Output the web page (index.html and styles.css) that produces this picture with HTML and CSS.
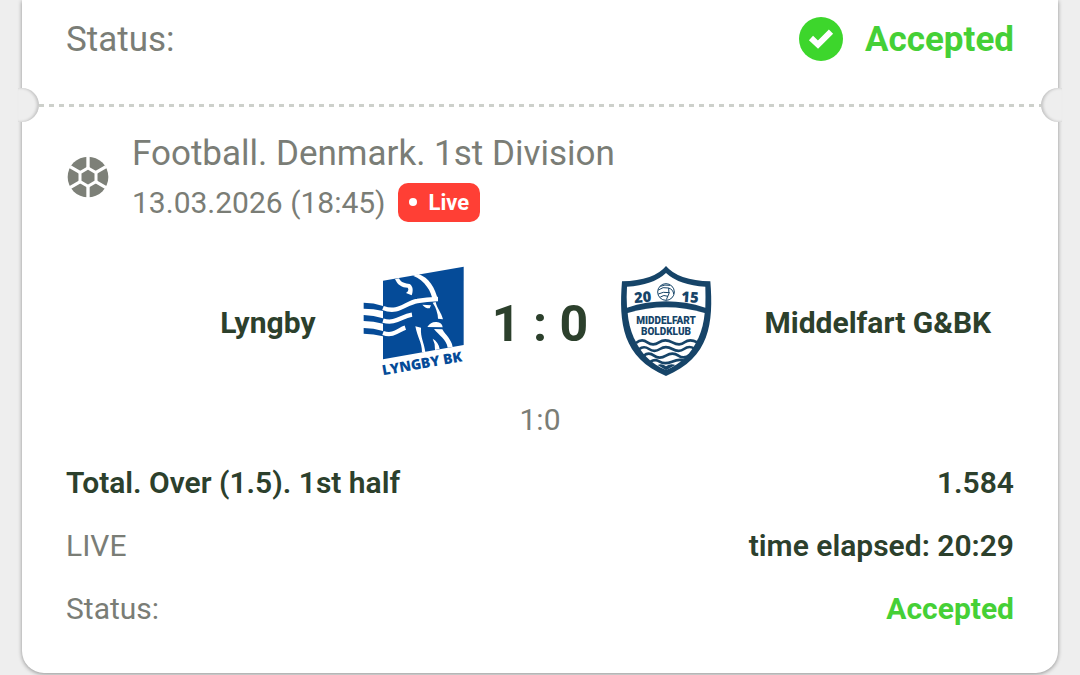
FILE: index.html
```
<!DOCTYPE html>
<html lang="en">
	<head>
		<meta charset="UTF-8">
		<meta name="viewport" content="width=device-width, initial-scale=1">
		<title>Bet slip</title>
		<link rel="stylesheet" href="styles.css">
	</head>
	<body>
		<main class="ticket">
			<div class="summary">
				<span class="label">Status:</span>
				<span class="accepted">
					<svg class="check" viewBox="0 0 132 132" aria-hidden="true">
						<circle cx="66" cy="66" r="66" fill="#3dd62c"/>
						<path d="M36 63 L57 83 L96 44" fill="none" stroke="#fff" stroke-width="18"/>
					</svg>
					Accepted
				</span>
			</div>

			<div class="tear"><div class="dashes"></div></div>

			<section class="match">
				<header class="event">
					<svg class="ball" viewBox="48 17 132 132" aria-hidden="true">
						<circle cx="114" cy="83" r="61" fill="#7d8078"/>
						<path d="M114 56 L138 70 V97 L114 111 L90 97 V70 Z" fill="none" stroke="#fff" stroke-width="9"/>
						<path d="M114 58 V20 M137 70 L168 52 M137 97 L168 115 M114 110 V146 M91 97 L60 115 M91 70 L60 52" stroke="#fff" stroke-width="10"/>
					</svg>
					<div>
						<div class="league">Football. Denmark. 1st Division</div>
						<div class="date">13.03.2026 (18:45) <span class="live">Live</span></div>
					</div>
				</header>

				<div class="teams">
					<span class="team home">Lyngby</span>
					<svg class="logo" viewBox="26 33 330 330" role="img" aria-label="Lyngby BK">
						<path d="M98 77 L340 35 V270 L98 313 Z" fill="#054b98"/>
						<!-- hair -->
						<path d="M40 143 Q70 143 98 153 V168 Q70 161 40 161 Z M40 180 Q70 181 98 190 V206 Q70 199 40 198 Z M40 219 Q70 219 98 228 V244 Q70 237 40 236 Z" fill="#054b98"/>
						<g fill="none" stroke="#fff" stroke-width="13">
							<path d="M98 159 C145 177 164 144 201 138 Q228 133 263 132"/>
							<path d="M98 197 C137 208 151 184 185 179"/>
							<path d="M98 234 C130 245 144 225 165 218"/>
						</g>
						<!-- helmet and horn -->
						<path d="M188 62 L204 57 C236 68 254 98 263 135 L247 137 C244 110 224 76 188 62 Z" fill="#fff"/>
						<path d="M134 72 L146 70 C152 84 165 85 178 87 C190 95 188 110 184 121 L167 114 Q178 105 172 98 C155 98 142 90 134 72 Z" fill="#fff"/>
						<!-- face -->
						<path d="M216 149 L242 151 L238 160 Q225 161 216 149 Z M247 143 L256 141 C259 158 273 173 278 193 L263 191 Q262 165 247 143 Z" fill="#fff"/>
						<path d="M231 216 Q242 199 259 201 Q275 202 277 217 Z" fill="#fff"/>
						<path d="M195 214 L212 218 C210 248 221 262 225 291 L215 292 C215 262 201 247 195 214 Z M251 222 L276 223 C286 241 303 252 307 276 L292 278 C289 254 265 240 251 222 Z M247 251 C258 257 266 268 268 282 L254 285 Q256 268 247 251 Z" fill="#fff"/>
						<text x="98" y="361" transform="rotate(-10 98 361)" class="lyngby-name">LYNGBY BK</text>
					</svg>
					<strong class="score">1 : 0</strong>
					<svg class="logo" viewBox="6 33 330 330" role="img" aria-label="Middelfart Boldklub">
						<path d="M168 33 Q205 77 301 79 C311 205 300 308 168 363 C37 308 26 205 36 79 Q132 77 168 33 Z" fill="#164468"/>
						<path d="M168 54 Q208 91 286 95 Q287 124 286 158 Q168 120 51 158 Q49 124 51 95 Q129 91 168 54 Z" fill="#fff"/>
						<path d="M53 174 Q168 139 284 174 Q281 213 265 250 H72 Q56 213 53 174 Z" fill="#fff"/>
						<path d="M72 249 H265 C243 298 214 325 168 345 C122 325 94 298 72 249 Z" fill="#fff"/>
						<g fill="none" stroke="#164468" stroke-width="8">
							<path d="M78 264 Q95 250 112 262 T147 262 T187 262 T224 262 T262 262"/>
							<path d="M87 283 Q101 271 117 282 T150 282 T187 282 T222 282 T252 280"/>
							<path d="M101 302 Q116 290 132 302 T168 302 T205 302 T240 299"/>
							<path d="M122 320 Q135 311 149 320 T186 320 T220 317"/>
						</g>
						<path d="M143 330 Q156 324 168 334 Q181 324 196 330 L168 346 Z" fill="#164468"/>
						<g fill="none" stroke="#164468" stroke-width="3">
							<circle cx="168" cy="111" r="25"/>
							<path d="M145 105 Q158 94 176 99 Q190 104 191 117 M151 94 Q164 88 180 91 M176 99 Q181 116 169 134 M145 117 Q158 109 179 113 M151 126 Q161 118 174 124"/>
						</g>
						<g class="crest-text">
							<text x="99" y="142" class="crest-year" transform="rotate(-4 99 142)">20</text>
							<text x="239" y="142" class="crest-year" transform="rotate(4 239 142)">15</text>
							<text x="168" y="206">MIDDELFART</text>
							<text x="168" y="241">BOLDKLUB</text>
						</g>
					</svg>
					<span class="team">Middelfart G&amp;BK</span>
				</div>
				<div class="periods">1:0</div>

				<dl class="bet">
					<div class="row">
						<dt class="market">Total. Over (1.5). 1st half</dt>
						<dd>1.584</dd>
					</div>
					<div class="row">
						<dt>LIVE</dt>
						<dd>time elapsed: 20:29</dd>
					</div>
					<div class="row">
						<dt>Status:</dt>
						<dd class="ok">Accepted</dd>
					</div>
				</dl>
			</section>
		</main>
	</body>
</html>
```
FILE: styles.css
```
*{margin: 0;padding: 0;box-sizing: border-box;}
body{
	background: #eee;
	color: #2c402c;
	font-family: Roboto, "Liberation Sans", sans-serif;
	font-size: 30px;
}
.ticket{
	margin: 0 22px 2px;
	padding: 18px 44px 33px;
	background: #fff;
	border-radius: 0 0 22px 22px;
	box-shadow: 0 1px 4px rgba(0,0,0,.4);
}
.summary{
	display: flex;
	justify-content: space-between;
	align-items: center;
	height: 42px;
	font-size: 35px;
}
.label{
	color: #7a7d76;
}
.accepted{
	display: flex;
	align-items: center;
	gap: 22px;
	color: #45d036;
	font-weight: 700;
}
.check{
	width: 44px;
	height: 44px;
}
/* perforated line with a half-round notch at each edge */
.tear{
	display: flex;
	align-items: center;
	justify-content: space-between;
	height: 34px;
	margin: 28px -48px 7px;
	overflow: hidden;
}
.tear::before,
.tear::after{
	content: "";
	flex: none;
	width: 21px;
	height: 34px;
	background: #eee;
}
.tear::before{
	border-radius: 0 17px 17px 0;
	box-shadow: inset -2px 0 3px rgba(0,0,0,.18);
}
.tear::after{
	border-radius: 17px 0 0 17px;
	box-shadow: inset 2px 0 3px rgba(0,0,0,.18);
}
.dashes{
	flex: 1;
	height: 3px;
	background: repeating-linear-gradient(90deg, #cdd0cb 0 5px, transparent 5px 10px);
}
.event{
	display: flex;
	align-items: center;
	gap: 22px;
	color: #7a7d76;
}
.ball{
	width: 44px;
	height: 44px;
}
.league{
	font-size: 35px;
	line-height: 50px;
}
.date{
	display: flex;
	align-items: center;
	gap: 12px;
	height: 46px;
}
.live{
	display: flex;
	align-items: center;
	gap: 12px;
	height: 39px;
	padding: 0 11px;
	border-radius: 10px;
	background: #ff3f35;
	color: #fff;
	font-size: 22px;
	font-weight: 700;
}
.live::before{
	content: "";
	width: 8px;
	height: 8px;
	border-radius: 50%;
	background: #fff;
}
.teams{
	display: grid;
	grid-template-columns: minmax(0, 1fr) 110px 143px 110px minmax(0, 1fr);
	align-items: center;
	margin-top: 41px;
}
.team{
	padding: 3px 43px 0;
	font-weight: 700;
	line-height: 36px;
	white-space: nowrap;
}
.home{
	text-align: right;
}
.logo{
	width: 110px;
	height: 110px;
	overflow: visible;
}
.lyngby-name{
	fill: #054b98;
	font: 800 42px "Open Sans", sans-serif;
}
.crest-text{
	fill: #164468;
	font: 900 30px Roboto, sans-serif;
	text-anchor: middle;
}
.crest-year{
	font: 800 44px "Open Sans", sans-serif;
}
.score{
	padding-top: 6px;
	font-size: 50px;
	text-align: center;
}
.periods{
	margin: 25px 0 12px;
	color: #7a7d76;
	line-height: 38px;
	text-align: center;
}
.row{
	display: flex;
	justify-content: space-between;
	line-height: 63px;
}
.row dt{
	color: #7a7d76;
}
.row dd,
.row .market{
	color: #2c402c;
	font-weight: 600;
}
.row .ok{
	color: #45d036;
	font-weight: 700;
}
```
